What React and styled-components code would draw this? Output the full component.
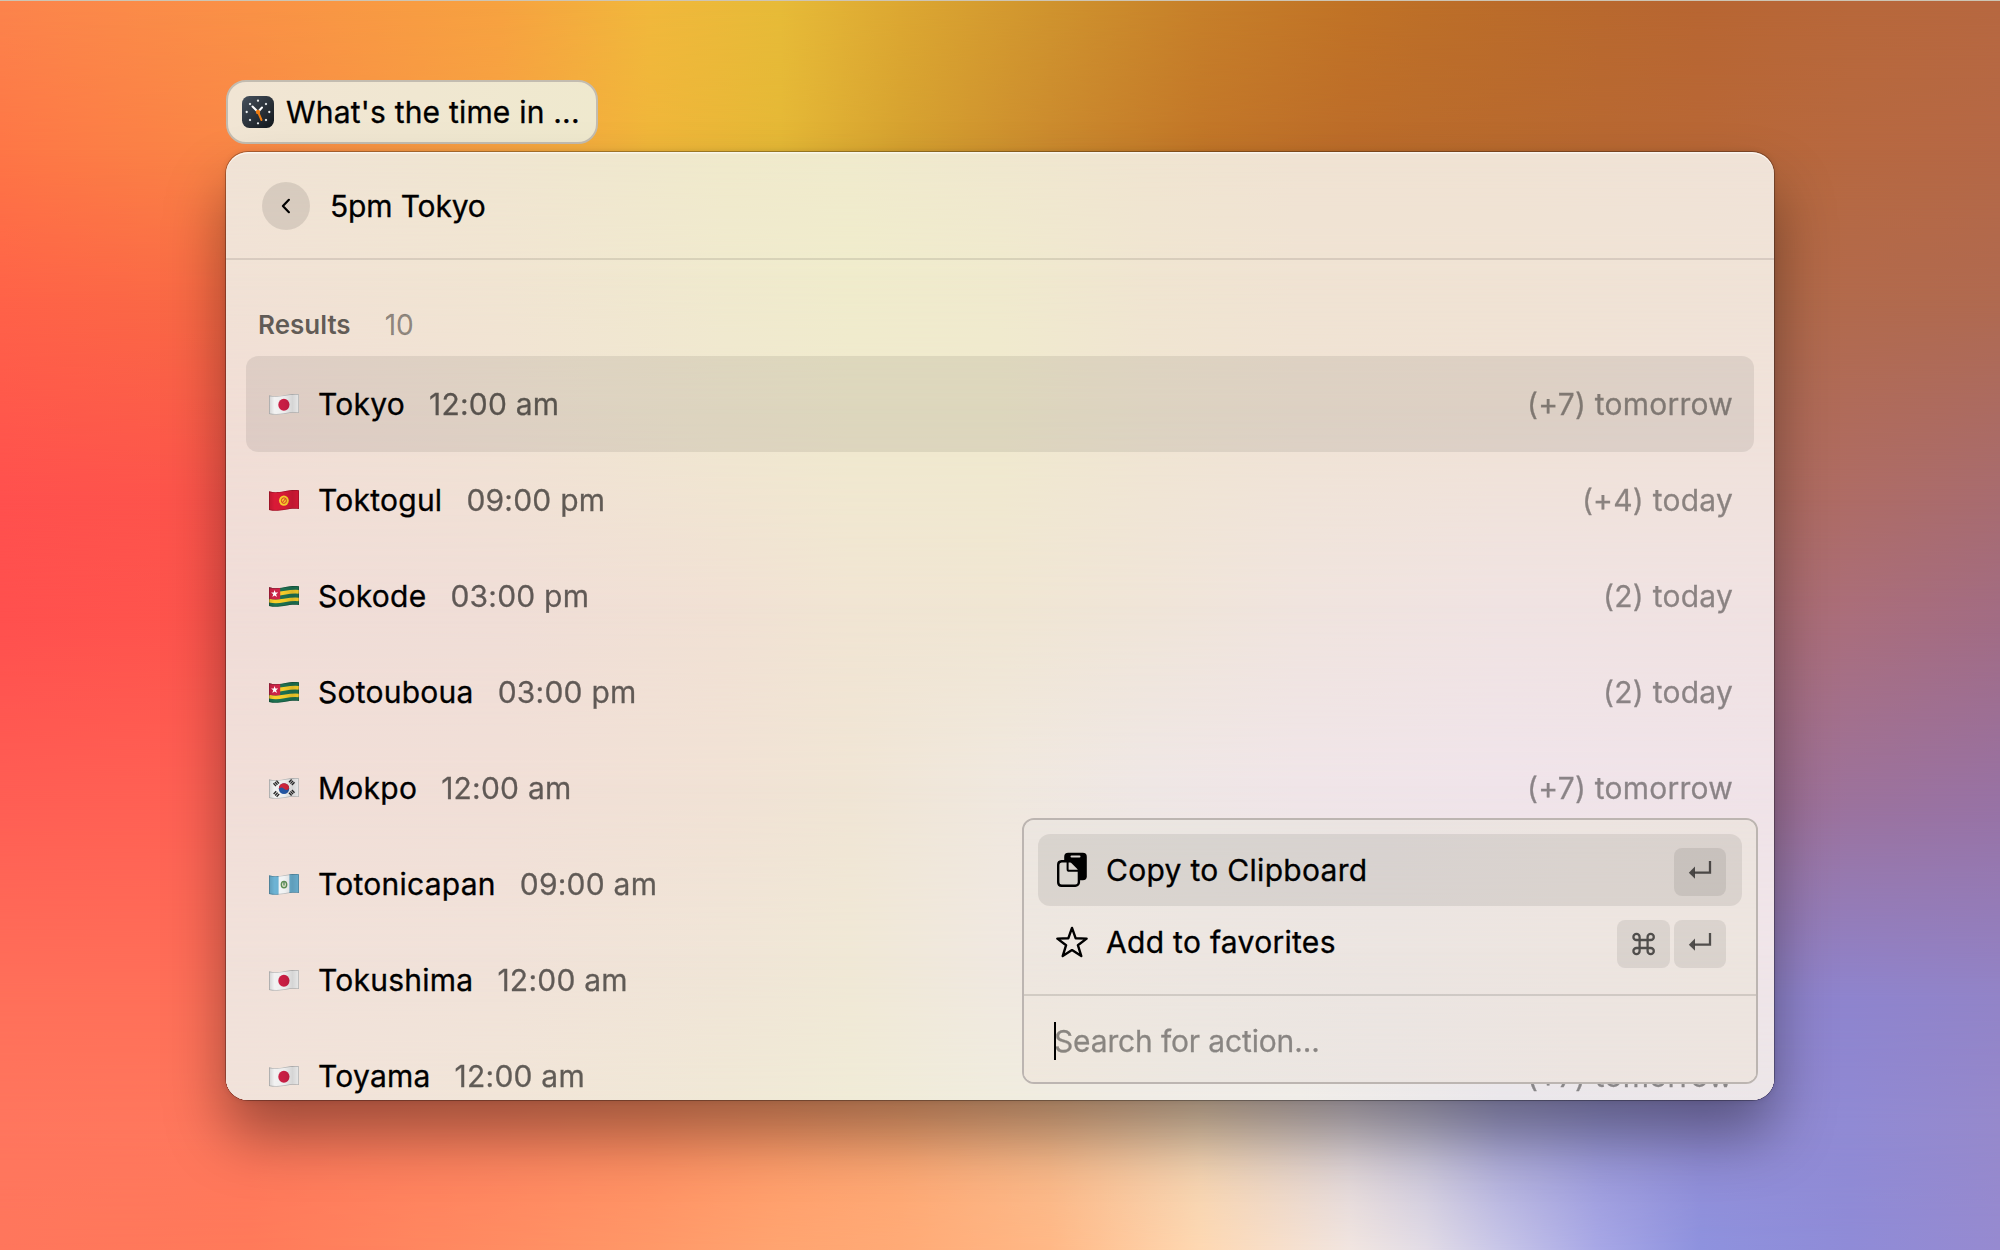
import React from "react";
import styled, { createGlobalStyle, css } from "styled-components";

const GlobalStyle = createGlobalStyle`
  * { box-sizing: border-box; }
  body {
    margin: 0;
    font-family: Inter, "Liberation Sans", sans-serif;
    color: #000;
    -webkit-font-smoothing: antialiased;
  }
`;

/* ---------- colour meshes ---------- */

const backdropMesh = {
  width: 2000,
  xs: [0, 250, 500, 650, 780, 900, 1050, 1200, 1350, 1425, 1500, 1600, 1700, 1850, 2000],
  rows: [
    [0, "252,132,76|250,146,70|247,162,64|241,184,60|231,187,56|221,168,50|208,148,46|199,128,42|193,115,38|189,111,40|187,108,42|185,105,46|184,102,50|184,104,58|183,104,64"],
    [150, "254,118,70|249,136,70|247,162,66|240,182,58|229,184,54|214,162,48|203,138,46|194,118,40|188,108,42|186,107,44|185,106,46|184,104,50|184,103,54|183,104,64|181,104,70"],
    [300, "255,98,72|248,108,68|244,150,62|238,175,54|228,180,52|210,155,46|192,124,40|188,112,40|184,104,44|183,104,48|182,104,52|181,105,60|180,106,70|178,106,76|176,106,80"],
    [500, "255,80,78|252,86,74|244,120,66|238,150,60|226,160,60|210,145,60|192,124,60|188,112,60|182,104,66|181,104,71|180,104,76|180,106,84|180,108,90|174,108,102|168,108,112"],
    [620, "255,80,78|254,86,76|246,115,70|240,140,70|228,150,70|212,145,80|200,134,90|190,120,90|186,114,96|184,113,100|182,112,104|179,110,110|176,110,112|170,110,124|162,108,132"],
    [800, "255,94,84|255,98,84|250,115,80|246,130,80|236,140,86|224,145,100|210,140,120|190,128,130|184,124,140|178,122,142|172,120,144|167,115,144|164,112,144|156,114,156|152,114,164"],
    [1000, "255,112,90|255,112,88|255,122,90|255,135,94|250,146,100|245,160,115|235,180,140|220,190,170|190,176,200|172,162,203|155,150,205|148,140,204|144,132,204|142,132,206|146,132,200"],
    [1130, "255,118,94|255,120,92|255,132,96|255,142,98|255,156,106|252,168,116|246,186,140|240,210,178|216,206,212|194,190,214|168,166,214|152,150,214|146,140,212|144,138,212|150,137,204"],
    [1250, "255,118,92|255,122,90|255,140,98|255,152,104|255,164,112|255,170,118|255,184,134|254,216,178|241,229,224|226,220,230|200,198,232|167,167,230|142,146,222|143,139,215|150,138,208"],
  ],
};

const windowMesh = {
  width: 1548,
  xs: [0, 274, 500, 624, 774, 924, 1074, 1274, 1548],
  rows: [
    [0, "240,227,214|240,230,209|240,234,204|240,235,205|240,232,207|240,229,209|240,227,211|240,227,212|240,227,216"],
    [120, "241,226,214|241,229,210|240,234,206|240,236,204|240,234,206|240,229,209|240,227,211|240,227,212|240,227,215"],
    [250, "241,222,214|241,227,212|240,232,208|240,234,206|240,234,206|240,229,210|240,227,212|240,226,213|240,226,218"],
    [450, "240,221,216|240,222,215|241,225,212|241,229,211|240,230,211|240,229,216|240,228,222|240,227,226|240,226,226"],
    [630, "241,222,216|241,223,215|241,226,213|240,229,213|240,232,222|239,231,229|240,229,232|240,228,234|240,227,232"],
    [800, "241,225,218|241,226,217|240,229,215|240,232,214|240,232,224|239,232,229|239,231,233|240,230,233|240,229,233"],
    [948, "241,226,218|241,229,216|240,232,214|240,235,215|240,236,222|240,236,230|240,237,232|234,231,235|236,230,232"],
  ],
};

const menuMesh = {
  width: 732,
  xs: [0, 180, 360, 560, 732],
  rows: [
    [0, "236,230,224|235,230,226|235,228,226|237,229,225|237,228,224"],
    [130, "238,231,224|237,230,225|236,229,225|237,229,224|237,229,223"],
    [262, "239,231,220|236,231,225|235,229,226|236,228,224|237,228,223"],
  ],
};

const Mesh = styled.div`
  position: absolute;
  inset: 0;
  overflow: hidden;
`;

/* Each band fades in over the one before it, which blends the rows smoothly. */
const Band = styled.div`
  position: absolute;
  inset: 0;
  background: ${(p) => p.$fill};
  mask-image: ${(p) =>
    p.$from === null
      ? "none"
      : `linear-gradient(to bottom, transparent ${p.$from}px, #000 ${p.$to}px)`};
`;

const ColourMesh = ({ mesh }) => (
  <Mesh>
    {mesh.rows.map(([y, colours], i) => {
      const stops = colours.split("|").map((c, k) => `rgb(${c}) ${mesh.xs[k]}px`);
      return (
        <Band
          key={y}
          $fill={`linear-gradient(to right, ${stops.join(", ")})`}
          $from={i === 0 ? null : mesh.rows[i - 1][0]}
          $to={y}
        />
      );
    })}
  </Mesh>
);

/* ---------- page ---------- */

const Desktop = styled.main`
  position: relative;
  width: 2000px;
  height: 1250px;
  overflow: hidden;
  padding: 80px 226px 0;
  display: flex;
  flex-direction: column;
  align-items: flex-start;
  gap: 8px;
`;

const ScreenEdge = styled.div`
  position: absolute;
  inset: 0 0 auto;
  height: 1px;
  background: #cdc5b4;
`;

const CommandTag = styled.div`
  position: relative;
  width: 372px;
  height: 64px;
  padding: 0 14px;
  display: flex;
  align-items: center;
  gap: 12px;
  border: 2px solid rgb(195, 188, 176);
  border-radius: 20px;
  background: linear-gradient(100deg, rgb(241, 229, 212), rgb(239, 233, 206));
  background-clip: border-box;
`;

const Label = styled.span`
  font-size: 30px;
  line-height: 36px;
  letter-spacing: ${(p) => p.$track ?? 0.3}px;
  -webkit-text-stroke: 0.3px currentColor;
  white-space: nowrap;
`;

const Window = styled.section`
  position: relative;
  width: 1548px;
  height: 948px;
  border-radius: 22px;
  box-shadow:
    0 0 0 1px rgba(0, 0, 0, 0.28),
    0 0 6px rgba(0, 0, 0, 0.12),
    0 36px 60px rgba(0, 0, 0, 0.38);
`;

const WindowBody = styled.div`
  position: relative;
  height: 100%;
  overflow: hidden;
  border-radius: 22px;
`;

const TopHighlight = styled.div`
  position: absolute;
  inset: 0;
  border-radius: 22px;
  box-shadow: inset 0 1.5px 0 rgba(255, 255, 255, 0.6);
`;

const Header = styled.header`
  position: relative;
  height: 108px;
  padding: 2px 0 0 36px;
  display: flex;
  align-items: center;
  gap: 20px;
  border-bottom: 2px solid rgba(0, 0, 0, 0.1);
`;

const BackButton = styled.button`
  width: 48px;
  height: 48px;
  padding: 0;
  border: 0;
  border-radius: 50%;
  background: rgba(0, 0, 0, 0.1);
  display: grid;
  place-items: center;
  color: #000;
`;

const SectionHead = styled.div`
  position: relative;
  height: 96px;
  padding: 33px 32px 0;
  display: flex;
  align-items: center;
  gap: 34px;
`;

const SectionTitle = styled.h2`
  margin: 0;
  font-size: 26px;
  line-height: 36px;
  font-weight: 600;
  letter-spacing: 0;
  color: rgba(0, 0, 0, 0.6);
`;

const SectionCount = styled.span`
  font-size: 28px;
  line-height: 36px;
  color: rgba(0, 0, 0, 0.42);
  -webkit-text-stroke: 0.3px rgba(0, 0, 0, 0.2);
`;

const ResultList = styled.ul`
  position: relative;
  margin: 0;
  padding: 0 20px;
  list-style: none;
`;

const ResultRow = styled.li`
  height: 96px;
  padding: 0 21px 0 23px;
  display: flex;
  align-items: center;
  border-radius: 12px;
  ${(p) =>
    p.$selected &&
    css`
      background: rgba(0, 0, 0, 0.08);
    `}
`;

const Place = styled(Label)`
  margin-left: 19px;
`;

const Time = styled(Label)`
  margin-left: 24px;
  opacity: 0.6;
`;

const Offset = styled(Label)`
  margin-left: auto;
  opacity: 0.42;
`;

/* ---------- action menu ---------- */

const ActionMenu = styled.aside`
  position: absolute;
  right: 16px;
  bottom: 16px;
  width: 736px;
  height: 266px;
  border: 2px solid rgb(188, 181, 177);
  border-radius: 12px;
  overflow: hidden;
  background: rgb(238, 230, 224);
`;

const Actions = styled.div`
  position: relative;
  height: 176px;
  padding: 14px 14px 0;
  border-bottom: 2px solid rgba(0, 0, 0, 0.12);
`;

const Action = styled.div`
  height: 72px;
  padding: 0 16px 0 18px;
  display: flex;
  align-items: center;
  gap: 18px;
  border-radius: 12px;
  background: ${(p) => (p.$selected ? "rgba(0, 0, 0, 0.08)" : "transparent")};
`;

const Keys = styled.div`
  margin: 4px 0 0 auto;
  display: flex;
  gap: 4px;
`;

const Key = styled.kbd`
  width: ${(p) => p.$width ?? 52}px;
  height: 48px;
  border-radius: 8px;
  background: rgba(0, 0, 0, 0.08);
  display: grid;
  place-items: center;
  color: rgba(0, 0, 0, 0.63);
`;

const SearchField = styled.div`
  position: relative;
  height: 86px;
  padding: 4px 0 0 30px;
  display: flex;
  align-items: center;
`;

const Caret = styled.i`
  width: 2px;
  height: 38px;
  background: #000;
  margin-right: -2px;
`;

const Placeholder = styled(Label)`
  opacity: 0.42;
`;

/* ---------- drawings ---------- */

const ClockIcon = () => (
  <svg width="32" height="32" viewBox="0 0 32 32">
    <defs>
      <linearGradient id="clockFace" x1="0" y1="0" x2="1" y2="1">
        <stop offset="0" stopColor="#46505c" />
        <stop offset="1" stopColor="#12171c" />
      </linearGradient>
    </defs>
    <rect width="32" height="32" rx="7.5" fill="url(#clockFace)" />
    {[0, 45, 90, 135, 180, 225, 270, 315].map((a) => (
      <circle key={a} cx="16" cy="4.7" r="1.15" fill="#e9ecee" transform={`rotate(${a} 16 16)`} />
    ))}
    <path d="M10.5 10.5 16 16l4-4.5" fill="none" stroke="#fff" strokeWidth="2" strokeLinecap="round" />
    <path d="M16 16l3.5 8" stroke="#f07d12" strokeWidth="2" strokeLinecap="round" />
    <circle cx="16" cy="16" r="2.2" fill="#f07d12" />
  </svg>
);

const ChevronIcon = () => (
  <svg width="10" height="16" viewBox="0 0 10 16">
    <path d="M7.9 1.8 1.9 8l6 6.2" fill="none" stroke="currentColor" strokeWidth="2.2" strokeLinecap="round" strokeLinejoin="round" />
  </svg>
);

const CopyIcon = () => (
  <svg width="32" height="36" viewBox="0 0 32 36">
    <rect x="8.2" y=".8" width="22.6" height="27.4" rx="4" fill="#000" />
    <path d="M15.5 4.4h8" stroke="#dcd7d2" strokeWidth="2" strokeLinecap="round" />
    <path d="M5.6 9.2H18.8l4.1 4.2V30.2a3.6 3.6 0 0 1-3.6 3.6H5.6A3.6 3.6 0 0 1 2.2 30.2V12.8A3.6 3.6 0 0 1 5.6 9.2z" fill="#dad6d0" stroke="#000" strokeWidth="2.4" />
    <path d="M12.6 8.2h11.2v11.4z" fill="#000" />
    <path d="M11.6 9v8.2a1.6 1.6 0 0 0 1.6 1.6h9.4" fill="none" stroke="#000" strokeWidth="2" />
  </svg>
);

const StarIcon = () => (
  <svg width="32" height="32" viewBox="0 0 32 32">
    <path
      d="M16 1.9 19.7 12.3 30.6 12.6 21.9 19.2 25.3 30.1 16 24.1 6.7 30.1 10.1 19.2 1.4 12.6 12.3 12.3Z"
      fill="none"
      stroke="#000"
      strokeWidth="2.4"
      strokeLinejoin="round"
    />
  </svg>
);

const ReturnIcon = () => (
  <svg width="24" height="24" viewBox="0 0 24 24">
    <path d="M.8 12.7 7 6.6v12.2z" fill="currentColor" />
    <path d="M6.8 12.7h15.2V1" fill="none" stroke="currentColor" strokeWidth="2.3" />
  </svg>
);

const CommandIcon = () => (
  <svg width="24" height="24" viewBox="0 0 24 24">
    <path
      d="M8 8V4.9A3.1 3.1 0 1 0 4.9 8H19.1A3.1 3.1 0 1 0 16 4.9V19.1A3.1 3.1 0 1 0 19.1 16H4.9A3.1 3.1 0 1 0 8 19.1Z"
      transform="translate(-.4 0)"
      fill="none"
      stroke="currentColor"
      strokeWidth="2.3"
    />
  </svg>
);

const wave = "M0 1.9C5 3.2 9 3 15 1.9C21 .8 25 .2 30 .9V19.6C25 18.9 21 19.5 15 20.6C9 21.6 5 21.8 0 20.5Z";

const Emblem = ({ country }) => {
  switch (country) {
    case "jp":
      return <ellipse cx="14.9" cy="11.3" rx="5.6" ry="6" fill="#cb1f45" />;
    case "kg":
      return (
        <g>
          <ellipse cx="14.9" cy="11.2" rx="4.9" ry="5.2" fill="#fbd02c" />
          <ellipse cx="14.9" cy="11.2" rx="2.5" ry="2.8" fill="none" stroke="#dc3a25" strokeWidth="1" />
          <path d="M13.5 13 16.4 9.4" stroke="#dc3a25" strokeWidth="1" />
        </g>
      );
    case "tg":
      return (
        <g>
          {[4.4, 12].map((y) => (
            <path
              key={y}
              d={`M0 ${y + 1.9}C5 ${y + 3.2} 9 ${y + 3} 15 ${y + 1.9}C21 ${y + 0.8} 25 ${y + 0.2} 30 ${y + 0.9}`}
              transform="translate(0 1.2)"
              fill="none"
              stroke="#f9cf2b"
              strokeWidth="3.7"
            />
          ))}
          <path d="M0 0H11.2V13.7C7 14.3 4 14.2 0 13.3Z" fill="#cf2347" />
          <path d="M5.6 4.6 6.5 7.2 9.2 7.2 7.1 8.9 7.9 11.5 5.6 10 3.4 11.5 4.2 8.9 2 7.2 4.8 7.2Z" fill="#fff" />
        </g>
      );
    case "kr":
      return (
        <g>
          <ellipse cx="15" cy="11.2" rx="5.2" ry="5.4" fill="#2557a5" />
          <path d="M10 9.6C11 4.4 19 4.6 20 9.4C20.6 13 17 13.6 15 11.4C13 9.2 10.4 9.8 9.9 12Z" fill="#d0263c" />
          <g stroke="#2b2b2b" strokeWidth="3.8" strokeDasharray="1.4 .6">
            <path d="M5.2 7.8 9.2 4.2" />
            <path d="M20.8 3 24.8 6.8" />
            <path d="M5.4 14.8 9.4 18.4" />
            <path d="M20.8 17.2 24.8 13.4" />
          </g>
        </g>
      );
    default:
      return (
        <g>
          <rect width="9.6" height="22" fill="#6db3d4" />
          <rect x="20.4" width="9.6" height="22" fill="#6db3d4" />
          <ellipse cx="15" cy="11.2" rx="2.7" ry="3.2" fill="#e7e9cf" stroke="#5f9156" strokeWidth="1.4" />
          <path d="M15 8.6v3.6" stroke="#3f7a55" strokeWidth="1.2" />
        </g>
      );
  }
};

const flagBase = { jp: "#f2f2f2", kg: "#d91a36", tg: "#1d7152", kr: "#f3f3f3", gt: "#f5f7f8" };

const Flag = ({ country, id }) => (
  <svg width="30" height="24" viewBox="0 -1.4 30 24">
    <defs>
      <clipPath id={`cut-${id}`}>
        <path d={wave} />
      </clipPath>
      <linearGradient id={`shade-${id}`}>
        <stop offset="0" stopColor="#000" stopOpacity=".13" />
        <stop offset=".18" stopColor="#000" stopOpacity="0" />
        <stop offset=".5" stopColor="#000" stopOpacity=".02" />
        <stop offset=".78" stopColor="#000" stopOpacity=".12" />
        <stop offset="1" stopColor="#000" stopOpacity=".04" />
      </linearGradient>
    </defs>
    <g clipPath={`url(#cut-${id})`}>
      <rect width="30" height="22" fill={flagBase[country]} />
      <Emblem country={country} />
      <rect width="30" height="22" fill={`url(#shade-${id})`} />
      <path d={wave} fill="none" stroke="#000" strokeOpacity=".22" strokeWidth="1.6" />
    </g>
  </svg>
);

/* ---------- data ---------- */

const results = [
  { country: "jp", place: "Tokyo", time: "12:00 am", offset: "(+7) tomorrow" },
  { country: "kg", place: "Toktogul", time: "09:00 pm", offset: "(+4) today" },
  { country: "tg", place: "Sokode", time: "03:00 pm", offset: "(2) today" },
  { country: "tg", place: "Sotouboua", time: "03:00 pm", offset: "(2) today" },
  { country: "kr", place: "Mokpo", time: "12:00 am", offset: "(+7) tomorrow" },
  { country: "gt", place: "Totonicapan", time: "09:00 am", offset: null },
  { country: "jp", place: "Tokushima", time: "12:00 am", offset: null },
  { country: "jp", place: "Toyama", time: "12:00 am", offset: "(+7) tomorrow" },
];

export default function App() {
  return (
    <>
      <GlobalStyle />
      <Desktop>
        <ColourMesh mesh={backdropMesh} />
        <ScreenEdge />
        <CommandTag>
          <ClockIcon />
          <Label $track={0.2}>What's the time in ...</Label>
        </CommandTag>
        <Window>
          <WindowBody>
            <ColourMesh mesh={windowMesh} />
            <TopHighlight />
            <Header>
              <BackButton>
                <ChevronIcon />
              </BackButton>
              <Label $track={-0.15}>5pm Tokyo</Label>
            </Header>
            <SectionHead>
              <SectionTitle>Results</SectionTitle>
              <SectionCount>10</SectionCount>
            </SectionHead>
            <ResultList>
              {results.map((r, i) => (
                <ResultRow key={r.place} $selected={i === 0}>
                  <Flag country={r.country} id={i} />
                  <Place $track={0.25}>{r.place}</Place>
                  <Time $track={0.22}>{r.time}</Time>
                  {r.offset && <Offset $track={0.24}>{r.offset}</Offset>}
                </ResultRow>
              ))}
            </ResultList>
            <ActionMenu>
              <ColourMesh mesh={menuMesh} />
              <Actions>
                <Action $selected>
                  <CopyIcon />
                  <Label>Copy to Clipboard</Label>
                  <Keys>
                    <Key>
                      <ReturnIcon />
                    </Key>
                  </Keys>
                </Action>
                <Action>
                  <StarIcon />
                  <Label>Add to favorites</Label>
                  <Keys>
                    <Key $width={53}>
                      <CommandIcon />
                    </Key>
                    <Key>
                      <ReturnIcon />
                    </Key>
                  </Keys>
                </Action>
              </Actions>
              <SearchField>
                <Caret />
                <Placeholder $track={-0.15}>Search for action...</Placeholder>
              </SearchField>
            </ActionMenu>
          </WindowBody>
        </Window>
      </Desktop>
    </>
  );
}
